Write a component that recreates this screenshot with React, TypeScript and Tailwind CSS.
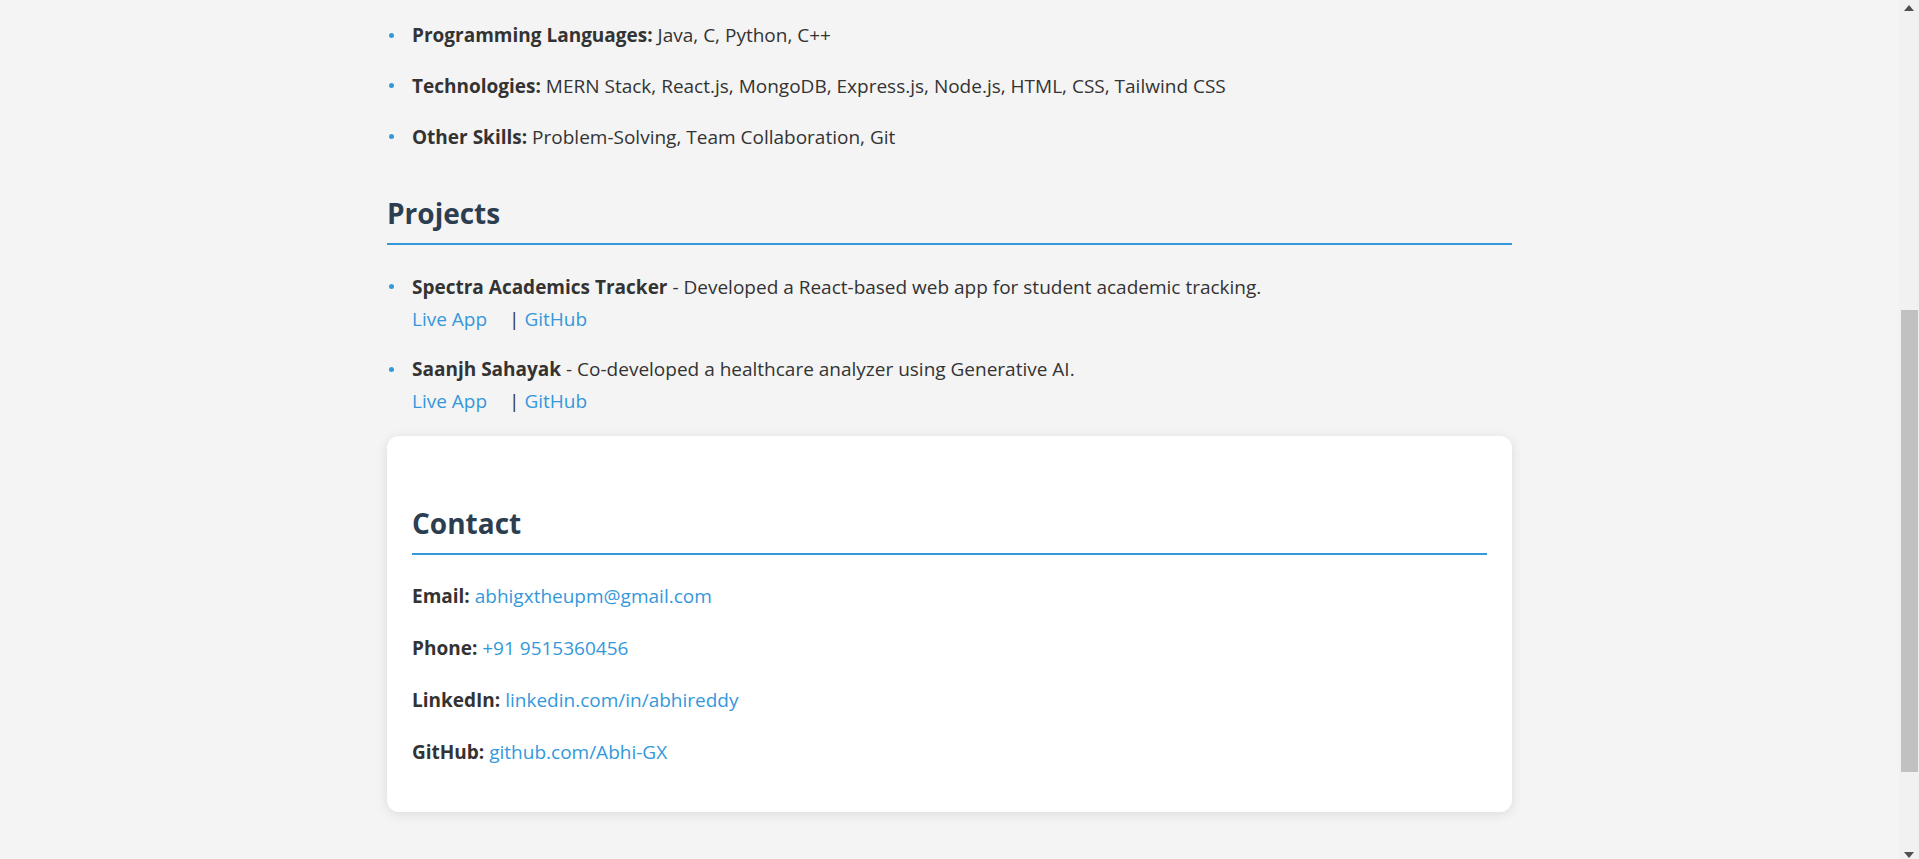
import React from 'react'

const skills = [
  { label: 'Programming Languages:', text: 'Java, C, Python, C++' },
  { label: 'Technologies:', text: 'MERN Stack, React.js, MongoDB, Express.js, Node.js, HTML, CSS, Tailwind CSS' },
  { label: 'Other Skills:', text: 'Problem-Solving, Team Collaboration, Git' },
]

const projects = [
  { name: 'Spectra Academics Tracker', text: 'Developed a React-based web app for student academic tracking.' },
  { name: 'Saanjh Sahayak', text: 'Co-developed a healthcare analyzer using Generative AI.' },
]

const contacts = [
  { label: 'Email:', value: 'abhigxtheupm@gmail.com' },
  { label: 'Phone:', value: '+91 9515360456' },
  { label: 'LinkedIn:', value: 'linkedin.com/in/abhireddy' },
  { label: 'GitHub:', value: 'github.com/Abhi-GX' },
]

function Bullet() {
  return (
    <span className="flex h-8 w-[25px] shrink-0 items-center">
      <span className="ml-[1.5px] h-[5px] w-[5px] rounded-full bg-[#3498db]"></span>
    </span>
  )
}

function SectionTitle({ children }: { children: React.ReactNode }) {
  return (
    <h2 className="border-b-2 border-[#3498db] pb-3 text-[28px] font-bold leading-9 text-[#2c3e50]">
      {children}
    </h2>
  )
}

function Scrollbar() {
  return (
    <div className="flex w-[20px] shrink-0 flex-col items-center bg-[#f1f1f1]">
      <div className="mt-[5px] h-0 w-0 border-x-[5px] border-b-[6px] border-x-transparent border-b-[#505050]"></div>
      <div className="mt-[299px] ml-[1px] h-[462px] w-[17px] bg-[#c1c1c1]"></div>
      <div className="mt-auto mb-[1px] h-0 w-0 border-x-[5px] border-t-[6px] border-x-transparent border-t-[#505050]"></div>
    </div>
  )
}

export default function App() {
  return (
    <div
      className="flex h-[859px] overflow-hidden bg-[#f4f4f4] text-[19px] leading-8 text-[#333]"
      style={{ fontFamily: '"Open Sans", "Noto Sans", sans-serif' }}
    >
      <main className="flex-1">
        <div className="mx-auto flex w-[1125px] flex-col pt-[19px]">
          <ul className="flex flex-col gap-[18.75px]">
            {skills.map(s => (
              <li key={s.label} className="flex">
                <Bullet />
                <p>
                  <strong className="font-bold">{s.label}</strong> {s.text}
                </p>
              </li>
            ))}
          </ul>

          <section className="mt-[42px]">
            <SectionTitle>Projects</SectionTitle>
            <ul className="mt-[26px] flex flex-col gap-[18.75px]">
              {projects.map(p => (
                <li key={p.name} className="flex">
                  <Bullet />
                  <div>
                    <p>
                      <strong className="font-bold">{p.name}</strong> - {p.text}
                    </p>
                    <p>
                      <a className="mr-[22px] text-[#3498db]">Live App</a>
                      <span>| </span>
                      <a className="text-[#3498db]">GitHub</a>
                    </p>
                  </div>
                </li>
              ))}
            </ul>
          </section>

          <section className="mt-[18.75px] rounded-[12px] bg-white px-[25px] pt-[69px] pb-[44px] shadow-[0_2px_12px_rgba(0,0,0,0.1)]">
            <SectionTitle>Contact</SectionTitle>
            <div className="mt-[25px] flex flex-col gap-5">
              {contacts.map(c => (
                <p key={c.label}>
                  <strong className="font-bold">{c.label}</strong>{' '}
                  <a className="text-[#3498db]">{c.value}</a>
                </p>
              ))}
            </div>
          </section>
        </div>
      </main>
      <Scrollbar />
    </div>
  )
}
